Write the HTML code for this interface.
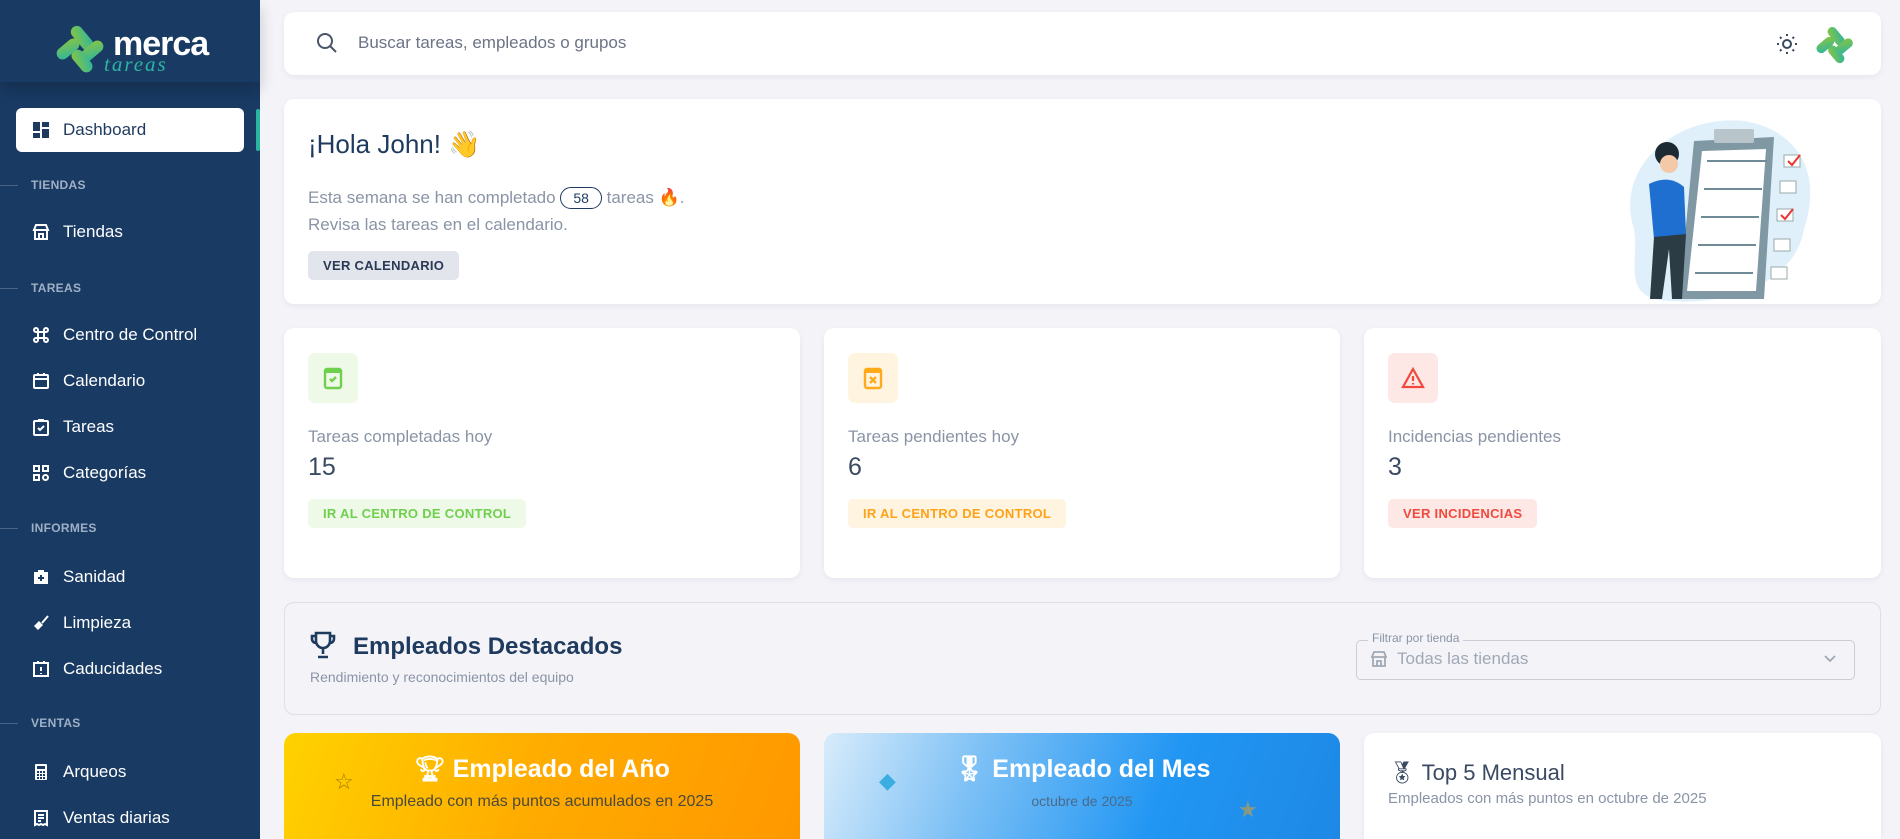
<!DOCTYPE html>
<html><head><meta charset="utf-8">
<style>
*{box-sizing:border-box;margin:0;padding:0}
html{width:1900px;height:839px;overflow:hidden}
body{width:1900px;height:839px;overflow:hidden;background:#f3f3f8;font-family:"Liberation Sans",sans-serif;position:relative;color:#1e3a5f}
.abs{position:absolute}
.sb{left:0;top:0;width:260px;height:839px;background:#193a63}
.logo{left:0;top:0;width:260px;height:82px;background:#193a63;box-shadow:0 8px 14px rgba(0,0,0,.18)}
.nav{position:absolute;left:31px;color:#fff;font-size:17px;display:flex;align-items:center;gap:0;height:24px}
.nav svg{width:20px;height:20px;margin-right:12px}
.sec{position:absolute;left:31px;color:#9fb0c6;font-size:12px;font-weight:bold;letter-spacing:.3px}
.secl{position:absolute;left:0;width:18px;height:1px;background:#4a6488}
.card{position:absolute;background:#fff;border-radius:10px;box-shadow:0 2px 6px rgba(30,40,80,.06)}
.lbl{font-size:17px;color:#8a94a6}
.num{font-size:25px;color:#3a4a63}
.btn{position:absolute;font-size:13px;font-weight:bold;letter-spacing:.3px;border-radius:5px;padding:0 15px;height:29px;line-height:29px}
.ib{position:absolute;left:24px;top:25px;width:50px;height:50px;border-radius:7px;display:flex;align-items:center;justify-content:center}
</style></head><body>
<div class="abs sb"></div>
<div class="abs logo">
<svg class="abs" style="left:56px;top:22px" width="54" height="54" viewBox="0 0 54 54">
<defs><linearGradient id="g" x1="0" y1="0" x2="1" y2="1"><stop offset="0" stop-color="#8cc63f"/><stop offset="1" stop-color="#2bb5a0"/></linearGradient></defs>
<rect x="20" y="2" width="12" height="28" rx="6" transform="rotate(-40 26 16)" fill="url(#g)"/>
<rect x="30" y="16" width="12" height="26" rx="6" transform="rotate(50 36 29)" fill="url(#g)"/>
<rect x="20" y="26" width="12" height="26" rx="6" transform="rotate(-40 26 39)" fill="url(#g)"/>
<rect x="6" y="14" width="12" height="26" rx="6" transform="rotate(50 12 27)" fill="url(#g)"/>
</svg>
<div class="abs" style="left:113px;top:25px;color:#fff;font-size:34px;font-weight:bold;letter-spacing:-1px">merca</div>
<div class="abs" style="left:104px;top:52px;color:#2bb5a0;font-size:21px;font-style:italic;font-family:'Liberation Serif',serif;letter-spacing:2px">tareas</div>
</div>
<div class="abs" style="left:16px;top:108px;width:228px;height:44px;background:#fff;border-radius:6px"></div>
<div class="abs" style="left:256px;top:109px;width:4px;height:42px;background:#2bb5a0;border-radius:2px"></div>
<div class="nav" style="top:118px;color:#1e3a5f"><svg viewBox="0 0 20 20"><rect x="2" y="2" width="7" height="9" fill="#1e3a5f"/><rect x="11" y="2" width="7" height="5" fill="#1e3a5f"/><rect x="2" y="13" width="7" height="5" fill="#1e3a5f"/><rect x="11" y="9" width="7" height="9" fill="#1e3a5f"/></svg>Dashboard</div>
<div class="secl" style="top:185px"></div><div class="sec" style="top:178px">TIENDAS</div>
<div class="nav" style="top:220px"><svg viewBox="0 0 20 20" fill="none" stroke="#fff" stroke-width="2"><path d="M3 8h14l-2-5H5z M4 8v9h12V8 M8 17v-5h4v5"/></svg>Tiendas</div>
<div class="secl" style="top:288px"></div><div class="sec" style="top:281px">TAREAS</div>
<div class="nav" style="top:323px"><svg viewBox="0 0 20 20" fill="none" stroke="#fff" stroke-width="2"><path d="M7 7h6v6H7z M7 7V5a2 2 0 1 0-2 2h2 M13 7V5a2 2 0 1 1 2 2h-2 M7 13v2a2 2 0 1 1-2-2h2 M13 13v2a2 2 0 1 0 2-2h-2"/></svg>Centro de Control</div>
<div class="nav" style="top:369px"><svg viewBox="0 0 20 20" fill="none" stroke="#fff" stroke-width="2"><rect x="3" y="4" width="14" height="13" rx="1"/><path d="M3 8h14M7 2v3M13 2v3"/></svg>Calendario</div>
<div class="nav" style="top:415px"><svg viewBox="0 0 20 20" fill="none" stroke="#fff" stroke-width="2"><rect x="3" y="4" width="14" height="14" rx="1"/><path d="M7 11l2 2 4-4M7 3h6"/></svg>Tareas</div>
<div class="nav" style="top:461px"><svg viewBox="0 0 20 20" fill="none" stroke="#fff" stroke-width="2"><rect x="3" y="3" width="5" height="5"/><rect x="12" y="3" width="5" height="5"/><rect x="3" y="12" width="5" height="5"/><circle cx="14.5" cy="14.5" r="2.5"/></svg>Categorías</div>
<div class="secl" style="top:528px"></div><div class="sec" style="top:521px">INFORMES</div>
<div class="nav" style="top:565px"><svg viewBox="0 0 20 20"><path d="M7 5V3h6v2h4v12H3V5z" fill="#fff"/><path d="M10 8v6M7 11h6" stroke="#193a63" stroke-width="2"/></svg>Sanidad</div>
<div class="nav" style="top:611px"><svg viewBox="0 0 20 20"><path d="M17 3l-6 7" stroke="#fff" stroke-width="2"/><path d="M3 13l5-5 4 4-5 5z" fill="#fff"/></svg>Limpieza</div>
<div class="nav" style="top:657px"><svg viewBox="0 0 20 20" fill="none" stroke="#fff" stroke-width="2"><rect x="3" y="4" width="14" height="13"/><path d="M7 2v3M13 2v3M10 8v4M10 14v1"/></svg>Caducidades</div>
<div class="secl" style="top:723px"></div><div class="sec" style="top:716px">VENTAS</div>
<div class="nav" style="top:760px"><svg viewBox="0 0 20 20"><rect x="4" y="2" width="12" height="16" rx="1" fill="#fff"/><rect x="6" y="4" width="8" height="3" fill="#193a63"/><path d="M6 9h2v2H6zM9 9h2v2H9zM12 9h2v2h-2zM6 12h2v2H6zM9 12h2v2H9zM12 12h2v2h-2zM6 15h2v2H6zM9 15h2v2H9zM12 15h2v2h-2z" fill="#193a63"/></svg>Arqueos</div>
<div class="nav" style="top:806px"><svg viewBox="0 0 20 20" fill="none" stroke="#fff" stroke-width="2"><path d="M4 3h12v14l-2-1-2 1-2-1-2 1-2-1-2 1z M7 7h6M7 10h6M7 13h3"/></svg>Ventas diarias</div>

<!-- search -->
<div class="card" style="left:284px;top:12px;width:1597px;height:63px"></div>
<svg class="abs" style="left:316px;top:32px" width="22" height="22" viewBox="0 0 22 22" fill="none" stroke="#4a5568" stroke-width="2"><circle cx="9" cy="9" r="7"/><path d="M14 14l6 6"/></svg>
<div class="abs" style="left:358px;top:33px;font-size:17px;color:#6b7385">Buscar tareas, empleados o grupos</div>
<svg class="abs" style="left:1776px;top:33px" width="22" height="22" viewBox="0 0 22 22" fill="none" stroke="#3a4a63" stroke-width="2"><circle cx="11" cy="11" r="4"/><path d="M11 1v2M11 19v2M1 11h2M19 11h2M4 4l1.5 1.5M16.5 16.5L18 18M4 18l1.5-1.5M16.5 5.5L18 4"/></svg>
<svg class="abs" style="left:1816px;top:24px" width="42" height="42" viewBox="0 0 54 54"><rect x="20" y="2" width="12" height="28" rx="6" transform="rotate(-40 26 16)" fill="url(#g)"/><rect x="30" y="16" width="12" height="26" rx="6" transform="rotate(50 36 29)" fill="url(#g)"/><rect x="20" y="26" width="12" height="26" rx="6" transform="rotate(-40 26 39)" fill="url(#g)"/><rect x="6" y="14" width="12" height="26" rx="6" transform="rotate(50 12 27)" fill="url(#g)"/></svg>

<!-- hello -->
<div class="card" style="left:284px;top:99px;width:1597px;height:205px;overflow:hidden">
<div class="abs" style="left:24px;top:30px;font-size:26px;color:#1e3a5f">¡Hola John! 👋</div>
<div class="abs" style="left:24px;top:88px;font-size:17px;color:#8a94a6">Esta semana se han completado <span style="display:inline-block;border:1.5px solid #1e3a5f;border-radius:14px;padding:2px 12px;color:#1e3a5f;font-size:14px">58</span> tareas 🔥.</div>
<div class="abs" style="left:24px;top:116px;font-size:17px;color:#8a94a6">Revisa las tareas en el calendario.</div>
<div class="btn" style="left:24px;top:152px;background:#e2e6ec;color:#2a3a55">VER CALENDARIO</div>
<svg class="abs" style="left:1310px;top:10px" width="240" height="195" viewBox="0 0 240 195">
<path d="M40 120 C20 60 80 5 150 12 C200 20 230 60 210 120 C200 180 120 200 60 190 C30 180 45 150 40 120z" fill="#dff0fb"/>
<path d="M100 32 L180 28 L170 190 L85 190z" fill="#7f98a4"/>
<path d="M108 42 L172 40 L162 182 L93 182z" fill="#fff"/>
<rect x="120" y="20" width="40" height="14" rx="2" fill="#b8c6cc"/>
<path d="M113 52h60M110 80h58M107 108h58M104 136h58M101 164h58" stroke="#6f8b96" stroke-width="2"/>
<rect x="190" y="46" width="16" height="12" fill="#fff" stroke="#9aa" />
<path d="M194 52l4 4 8-10" stroke="#e33" stroke-width="2" fill="none"/>
<rect x="186" y="72" width="16" height="12" fill="#fff" stroke="#9aa"/>
<rect x="183" y="100" width="16" height="12" fill="#fff" stroke="#9aa"/>
<path d="M187 106l4 4 8-10" stroke="#e33" stroke-width="2" fill="none"/>
<rect x="180" y="130" width="16" height="12" fill="#fff" stroke="#9aa"/>
<rect x="177" y="158" width="16" height="12" fill="#fff" stroke="#9aa"/>
<circle cx="73" cy="45" r="12" fill="#1b2a33"/>
<circle cx="75" cy="55" r="9" fill="#f3c9a8"/>
<path d="M55 75 Q75 65 90 78 L92 125 L60 130z" fill="#1f6fd1"/>
<path d="M60 128 L92 125 L88 190 L78 190 L75 140 L68 190 L56 190z" fill="#2b3c44"/>
</svg>
</div>

<!-- stat cards -->
<div class="card" style="left:284px;top:328px;width:516px;height:250px">
<div class="ib" style="background:#eef9e8"><svg width="22" height="24" viewBox="0 0 22 24" fill="none" stroke="#6fd04d" stroke-width="2.4"><rect x="3" y="3" width="16" height="19" rx="2"/><path d="M3 5h16" stroke-width="4"/><path d="M8 13l2 2 4-4"/></svg></div>
<div class="abs lbl" style="left:24px;top:99px">Tareas completadas hoy</div>
<div class="abs num" style="left:24px;top:125px">15</div>
<div class="btn" style="left:24px;top:171px;background:#eef9e8;color:#6fd04d">IR AL CENTRO DE CONTROL</div>
</div>
<div class="card" style="left:824px;top:328px;width:516px;height:250px">
<div class="ib" style="background:#fff4e0"><svg width="22" height="24" viewBox="0 0 22 24" fill="none" stroke="#ffaa1a" stroke-width="2.4"><rect x="3" y="3" width="16" height="19" rx="2"/><path d="M3 5h16" stroke-width="4"/><path d="M8 11l6 6M14 11l-6 6"/></svg></div>
<div class="abs lbl" style="left:24px;top:99px">Tareas pendientes hoy</div>
<div class="abs num" style="left:24px;top:125px">6</div>
<div class="btn" style="left:24px;top:171px;background:#fff4e0;color:#ffa21a">IR AL CENTRO DE CONTROL</div>
</div>
<div class="card" style="left:1364px;top:328px;width:517px;height:250px">
<div class="ib" style="background:#fde8e6"><svg width="24" height="22" viewBox="0 0 24 22" fill="none" stroke="#f04a3e" stroke-width="2.2"><path d="M12 2L22 20H2z"/><path d="M12 9v5M12 16v1.5"/></svg></div>
<div class="abs lbl" style="left:24px;top:99px">Incidencias pendientes</div>
<div class="abs num" style="left:24px;top:125px">3</div>
<div class="btn" style="left:24px;top:171px;background:#fde8e6;color:#f04a3e">VER INCIDENCIAS</div>
</div>

<!-- destacados -->
<div class="abs" style="left:284px;top:602px;width:1597px;height:113px;border:1px solid #dde0e6;border-radius:10px;background:#f4f4f8"></div>
<svg class="abs" style="left:310px;top:630px" width="26" height="30" viewBox="0 0 26 30" fill="none" stroke="#1e3a5f" stroke-width="2.6"><path d="M6 3h14v8a7 7 0 0 1-14 0z M6 6H2v3a4 4 0 0 0 4 4 M20 6h4v3a4 4 0 0 1-4 4 M13 18v6 M8 27h10"/></svg>
<div class="abs" style="left:353px;top:633px;font-size:24px;font-weight:bold;color:#1e3a5f">Empleados Destacados</div>
<div class="abs" style="left:310px;top:669px;font-size:14px;color:#8a94a6">Rendimiento y reconocimientos del equipo</div>
<div class="abs" style="left:1356px;top:640px;width:499px;height:40px;border:1px solid #c8ccd4;border-radius:5px"></div>
<div class="abs" style="left:1368px;top:631px;background:#f4f4f8;padding:0 4px;font-size:12px;color:#8a94a6">Filtrar por tienda</div>
<svg class="abs" style="left:1369px;top:649px" width="20" height="20" viewBox="0 0 20 20" fill="none" stroke="#a0a8b6" stroke-width="1.8"><path d="M3 8h14l-2-5H5z M4 8v9h12V8 M8 17v-5h4v5"/></svg>
<div class="abs" style="left:1397px;top:649px;font-size:17px;color:#a0a8b6">Todas las tiendas</div>
<svg class="abs" style="left:1823px;top:654px" width="14" height="10" viewBox="0 0 14 10" fill="none" stroke="#a0a8b6" stroke-width="1.8"><path d="M2 2l5 5 5-5"/></svg>

<!-- bottom cards -->
<div class="abs" style="left:284px;top:733px;width:516px;height:106px;border-radius:12px 12px 0 0;background:linear-gradient(110deg,#ffd200 0%,#ffab00 50%,#ff9800 100%);overflow:hidden">
<div class="abs" style="left:0;width:516px;top:22px;text-align:center;color:#fff;font-size:25px;font-weight:bold">🏆︎ Empleado del Año</div>
<div class="abs" style="left:0;width:516px;top:60px;text-align:center;color:#4a4a3a;font-size:16px">Empleado con más puntos acumulados en 2025</div>
<div class="abs" style="left:50px;top:36px;color:#a07a00;font-size:22px">☆</div>
</div>
<div class="abs" style="left:824px;top:733px;width:516px;height:106px;border-radius:12px 12px 0 0;background:linear-gradient(110deg,#d8ecfb 0%,#7cc0f5 30%,#2196f3 65%,#1e88e5 100%);overflow:hidden">
<div class="abs" style="left:0;width:516px;top:22px;text-align:center;color:#fff;font-size:25px;font-weight:bold">🎖︎ Empleado del Mes</div>
<div class="abs" style="left:0;width:516px;top:60px;text-align:center;color:#4a6a8a;font-size:14px">octubre de 2025</div>
<div class="abs" style="left:55px;top:35px;color:#3aaee0;font-size:22px">◆</div>
<div class="abs" style="left:414px;top:64px;color:#8a9a80;font-size:22px">★</div>
</div>
<div class="card" style="left:1364px;top:733px;width:517px;height:106px;border-radius:10px 10px 0 0">
<div class="abs" style="left:24px;top:27px;font-size:22px;color:#3a4a63">🏅︎ Top 5 Mensual</div>
<div class="abs" style="left:24px;top:57px;font-size:15px;color:#8a94a6">Empleados con más puntos en octubre de 2025</div>
</div>
</body></html>
